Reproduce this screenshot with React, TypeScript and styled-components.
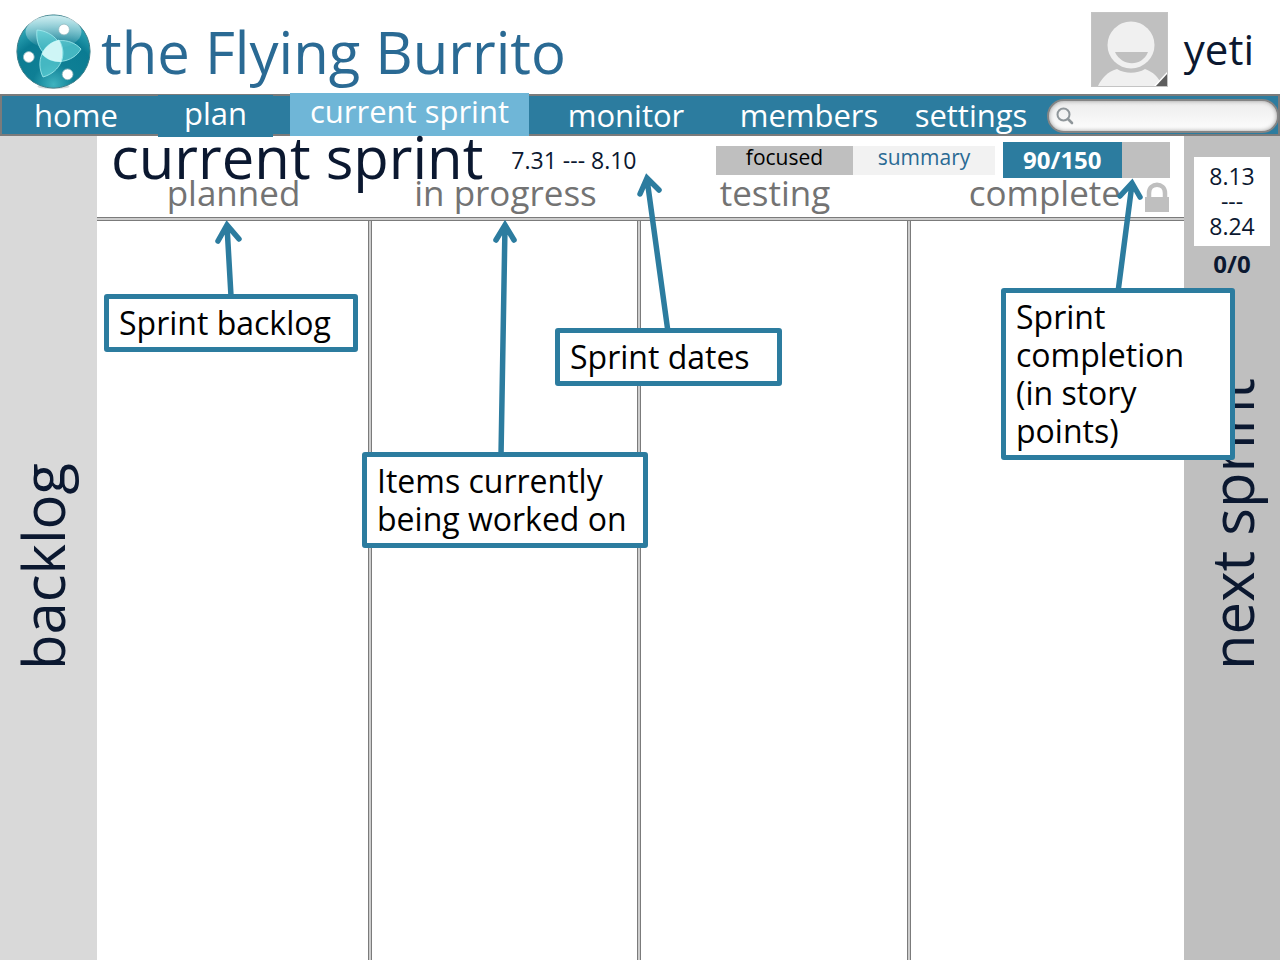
import React from "react";
import styled, { createGlobalStyle } from "styled-components";

const color = {
  teal: "#2c7c9f",
  sky: "#6fb6d7",
  rule: "#7b7b7b",
  ruleFill: "#cdcdcd",
  ink: "#0b1830",
  label: "#737373",
  mid: "#bfbfbf",
  pale: "#d9d9d9",
};

const GlobalStyle = createGlobalStyle`
  * { box-sizing: border-box; }
  html, body, #root { height: 100%; }
  body {
    margin: 0;
    background: #fff;
    color: ${color.ink};
    font-family: "Open Sans", "Noto Sans", sans-serif;
    font-weight: 400;
  }
`;

const Page = styled.div`
  position: relative;
  display: flex;
  flex-direction: column;
  min-height: 100%;
  overflow: hidden;
`;

const Header = styled.header`
  display: flex;
  align-items: center;
  height: 94px;
  padding: 10px 26px 0 16px;
`;

const Brand = styled.a`
  display: flex;
  align-items: center;
  gap: 10px;
  margin-right: auto;
  color: #2a6a94;
  text-decoration: none;
`;

const BrandName = styled.h1`
  margin: 0;
  font-size: 58px;
  line-height: 80px;
  font-weight: 400;
  white-space: nowrap;
`;

const User = styled.button`
  display: flex;
  align-items: center;
  gap: 16px;
  margin-bottom: 6px;
  padding: 0;
  border: 0;
  background: none;
  color: inherit;
  font: inherit;
  font-size: 42px;
  line-height: 76px;
`;

const Nav = styled.nav`
  display: flex;
  height: 42px;
  background: ${color.teal};
  box-shadow: inset 0 0 0 2px ${color.rule};
`;

const NavLink = styled.a<{ $grow: number }>`
  flex: ${(p) => p.$grow} 1 0;
  min-width: 0;
  color: #fff;
  font-size: 31px;
  line-height: 42px;
  text-align: center;
  text-decoration: none;
  white-space: nowrap;
`;

const PlanLink = styled(NavLink)`
  margin: 1px 17px -1px 6px;
  background: ${color.teal};
  line-height: 36px;
`;

const CurrentLink = styled(NavLink)`
  margin-top: -1px;
  background: ${color.sky};
  line-height: 36px;
`;

const Search = styled.label<{ $grow: number }>`
  flex: ${(p) => p.$grow} 1 0;
  min-width: 0;
  display: flex;
  align-items: center;
  gap: 6px;
  margin: 5px 1px 3px 0;
  padding: 0 16px 0 7px;
  border: 2px solid #858585;
  border-radius: 17px;
  background: linear-gradient(#ececec, #fdfdfd);
  box-shadow: inset 0 0 4px #9a9a9a;
`;

const SearchInput = styled.input`
  flex: 1;
  min-width: 0;
  border: 0;
  outline: 0;
  background: none;
  font: inherit;
  font-size: 16px;
`;

const Body = styled.div`
  flex: 1;
  display: flex;
`;

const Side = styled.aside<{ $tone: string; $width: number; $inset?: number }>`
  flex: 0 0 ${(p) => p.$width}px;
  display: flex;
  flex-direction: column;
  align-items: center;
  padding: 21px ${(p) => p.$inset ?? 0}px 0 0;
  background: ${(p) => p.$tone};
`;

const SideTitle = styled.h2`
  margin: auto 0 290px;
  font-size: 58px;
  line-height: 80px;
  font-weight: 400;
  white-space: nowrap;
  writing-mode: vertical-rl;
  transform: rotate(180deg);
`;

const NextDates = styled.div`
  width: 76px;
  height: 89px;
  padding-top: 7px;
  background: #fff;
  font-size: 23px;
  line-height: 25px;
  text-align: center;
`;

const NextPoints = styled.strong`
  font-size: 24px;
  line-height: 36px;
  font-weight: 700;
`;

const Main = styled.main`
  flex: 1;
  min-width: 0;
  display: flex;
  flex-direction: column;
`;

const TitleBar = styled.div`
  display: flex;
  height: 42px;
  padding: 0 14px 0 14px;
  line-height: 42px;
  white-space: nowrap;
`;

const Title = styled.h2`
  margin: 0 28px 0 0;
  font-size: 58px;
  font-weight: 400;
`;

const Dates = styled.span`
  margin: 3px auto 0 0;
  font-size: 23px;
`;

const ViewSwitch = styled.div`
  display: flex;
  height: 29px;
  margin: 10px 8px 0 0;
`;

const ViewButton = styled.button<{ $active?: boolean }>`
  width: ${(p) => (p.$active ? 137 : 142)}px;
  padding: 0 0 6px;
  border: 0;
  background: ${(p) => (p.$active ? color.mid : "#f2f2f2")};
  color: ${(p) => (p.$active ? "#000" : "#2a6a94")};
  font: inherit;
  font-size: 21px;
  line-height: 23px;
`;

const Meter = styled.div`
  width: 167px;
  height: 36px;
  margin-top: 6px;
  background: ${color.mid};
`;

const MeterFill = styled.div`
  width: 71%;
  height: 36px;
  background: ${color.teal};
  color: #fff;
  font-size: 24px;
  line-height: 36px;
  font-weight: 700;
  text-align: center;
`;

const Board = styled.div`
  flex: 1;
  display: grid;
  grid-template-columns: 275fr 269fr 270fr 273fr;
`;

const Column = styled.section`
  display: flex;
  flex-direction: column;
`;

const ColumnHead = styled.h3<{ $end?: boolean }>`
  display: flex;
  align-items: flex-start;
  justify-content: ${(p) => (p.$end ? "flex-end" : "center")};
  gap: 24px;
  height: 43px;
  margin: 0;
  padding: 0 ${(p) => (p.$end ? 15 : 2)}px 9px 0;
  background: linear-gradient(${color.rule} 1px, ${color.ruleFill} 1px 3px, ${color.rule} 3px) bottom / 100% 4px no-repeat;
  color: ${color.label};
  font-size: 35px;
  line-height: 30px;
  font-weight: 400;
  white-space: nowrap;

  svg { align-self: flex-end; }
`;

const ColumnBody = styled.div`
  flex: 1;
  ${Column}:not(:last-child) & {
    background: linear-gradient(90deg, ${color.rule} 1px, ${color.ruleFill} 1px 3px, ${color.rule} 3px) right / 4px 100% no-repeat;
  }
`;

const Arrows = styled.svg`
  position: absolute;
  left: 0;
  top: 0;
  width: 1280px;
  height: 560px;
  fill: none;
  stroke: ${color.teal};
  stroke-width: 5.5;
  stroke-linecap: round;
  pointer-events: none;
`;

const Callout = styled.p<{ $x: number; $y: number; $w: number }>`
  position: absolute;
  left: ${(p) => p.$x}px;
  top: ${(p) => p.$y}px;
  width: ${(p) => p.$w}px;
  margin: 0;
  padding: 5px 0 5px 10px;
  border: 5px solid ${color.teal};
  border-radius: 3px;
  background: #fff;
  color: #000;
  font-size: 32px;
  line-height: 38px;
  white-space: nowrap;
`;

const Logo = () => (
  <svg width="75" height="76" viewBox="16 15 75 76" aria-hidden="true">
    <defs>
      <radialGradient id="orb" cx="0.5" cy="0.95" r="0.95">
        <stop offset="0" stopColor="#3fb3bf" />
        <stop offset="0.3" stopColor="#0f7f95" />
        <stop offset="0.65" stopColor="#0a7b92" />
        <stop offset="1" stopColor="#3fb9c6" />
      </radialGradient>
      <linearGradient id="gloss" x1="0" y1="0" x2="0" y2="1">
        <stop offset="0" stopColor="#fff" stopOpacity="0.75" />
        <stop offset="1" stopColor="#fff" stopOpacity="0" />
      </linearGradient>
    </defs>
    <ellipse cx="53.5" cy="87.5" rx="16" ry="2.5" fill="#d5dadb" />
    <circle cx="53.5" cy="52.5" r="36.6" fill="url(#orb)" stroke="#3d7f8a" strokeWidth="1" />
    <ellipse cx="53.5" cy="33" rx="28" ry="16.5" fill="url(#gloss)" />
    <g fill="#62d6da" fillOpacity="0.65" stroke="#a5eef0" strokeWidth="0.8">
      <path d="M37 31C53 32 67 47 61 63C45 60 35 48 37 31Z" />
      <path d="M81 50C70 38 49 38 42 55C52 67 73 64 81 50Z" />
      <path d="M43 78C35 62 43 45 59 41C68 55 61 73 43 78Z" />
    </g>
    <path d="M42 55C45 48 51 43 59 41C63 48 63 56 61 63C53 63 46 60 42 55Z" fill="#e2fbfb" fillOpacity="0.85" />
    <g fill="#fff" stroke="#8fb7bf" strokeWidth="0.8">
      <circle cx="64" cy="30.5" r="5.4" />
      <circle cx="28.8" cy="58" r="5.4" />
      <circle cx="67.6" cy="75.3" r="5.4" />
    </g>
  </svg>
);

const Avatar = () => (
  <svg width="77" height="75" viewBox="0 0 77 75" aria-hidden="true">
    <rect width="77" height="75" fill="#c0c0c0" />
    <path d="M7 74C11 66 16 60 26 57C34 62 46 62 54 57C62 60 68 65 71 74Z" fill="#f0f0f0" />
    <circle cx="40" cy="34" r="25" fill="#c0c0c0" />
    <circle cx="40" cy="33" r="23.5" fill="#f0f0f0" />
    <path d="M24 40H57C51 55 31 55 24 40Z" fill="#c0c0c0" />
    <path d="M77 60V75H63Z" fill="#5d5d5d" />
    <path d="M77 60L63 75" stroke="#fff" strokeWidth="1.5" />
    <rect x="0.5" y="0.5" width="76" height="74" fill="none" stroke="#c4c4c4" />
  </svg>
);

const SearchIcon = () => (
  <svg width="18" height="18" viewBox="0 0 18 18" fill="none" stroke="#8f969a" aria-hidden="true">
    <circle cx="7.5" cy="7.5" r="6" strokeWidth="2" />
    <path d="M12 12L16 16" strokeWidth="2.6" strokeLinecap="round" />
  </svg>
);

const Lock = () => (
  <svg width="24" height="30" viewBox="0 0 24 30" aria-label="locked">
    <path d="M4 16V11C4 0 20 0 20 11V16" fill="none" stroke={color.mid} strokeWidth="4.5" />
    <rect y="15" width="24" height="15" fill={color.mid} />
  </svg>
);

export default function App() {
  return (
    <>
      <GlobalStyle />
      <Page>
        <Header>
          <Brand href="#">
            <Logo />
            <BrandName>the Flying Burrito</BrandName>
          </Brand>
          <User>
            <Avatar />
            yeti
          </User>
        </Header>
        <Nav>
          <NavLink href="#" $grow={152}>home</NavLink>
          <PlanLink href="#" $grow={115}>plan</PlanLink>
          <CurrentLink href="#" $grow={239} aria-current="page">current sprint</CurrentLink>
          <NavLink href="#" $grow={194}>monitor</NavLink>
          <NavLink href="#" $grow={172}>members</NavLink>
          <NavLink href="#" $grow={152}>settings</NavLink>
          <Search $grow={205}>
            <SearchIcon />
            <SearchInput type="search" aria-label="Search" />
          </Search>
        </Nav>
        <Body>
          <Side $tone={color.pale} $width={97} $inset={12}>
            <SideTitle>backlog</SideTitle>
          </Side>
          <Main>
            <TitleBar>
              <Title>current sprint</Title>
              <Dates>7.31 --- 8.10</Dates>
              <ViewSwitch>
                <ViewButton $active>focused</ViewButton>
                <ViewButton>summary</ViewButton>
              </ViewSwitch>
              <Meter>
                <MeterFill>90/150</MeterFill>
              </Meter>
            </TitleBar>
            <Board>
              <Column>
                <ColumnHead>planned</ColumnHead>
                <ColumnBody />
              </Column>
              <Column>
                <ColumnHead>in progress</ColumnHead>
                <ColumnBody />
              </Column>
              <Column>
                <ColumnHead>testing</ColumnHead>
                <ColumnBody />
              </Column>
              <Column>
                <ColumnHead $end>complete<Lock /></ColumnHead>
                <ColumnBody />
              </Column>
            </Board>
          </Main>
          <Side $tone={color.mid} $width={96}>
            <NextDates>
              8.13<br />---<br />8.24
            </NextDates>
            <NextPoints>0/0</NextPoints>
            <SideTitle>next sprint</SideTitle>
          </Side>
        </Body>
        <Arrows viewBox="0 0 1280 560" aria-hidden="true">
          <path d="M231 296L227 226M218 241L227 225L239 239" />
          <path d="M501 456L505 226M496 240L505 225L514 240" />
          <path d="M668 332L647 179M640 194L647 178L659 190" />
          <path d="M1118 292L1132 184M1120 196L1132 183L1140 197" />
        </Arrows>
        <Callout $x={104} $y={294} $w={254}>Sprint backlog</Callout>
        <Callout $x={362} $y={452} $w={286}>Items currently<br />being worked on</Callout>
        <Callout $x={555} $y={328} $w={227}>Sprint dates</Callout>
        <Callout $x={1001} $y={288} $w={234}>Sprint<br />completion<br />(in story<br />points)</Callout>
      </Page>
    </>
  );
}
